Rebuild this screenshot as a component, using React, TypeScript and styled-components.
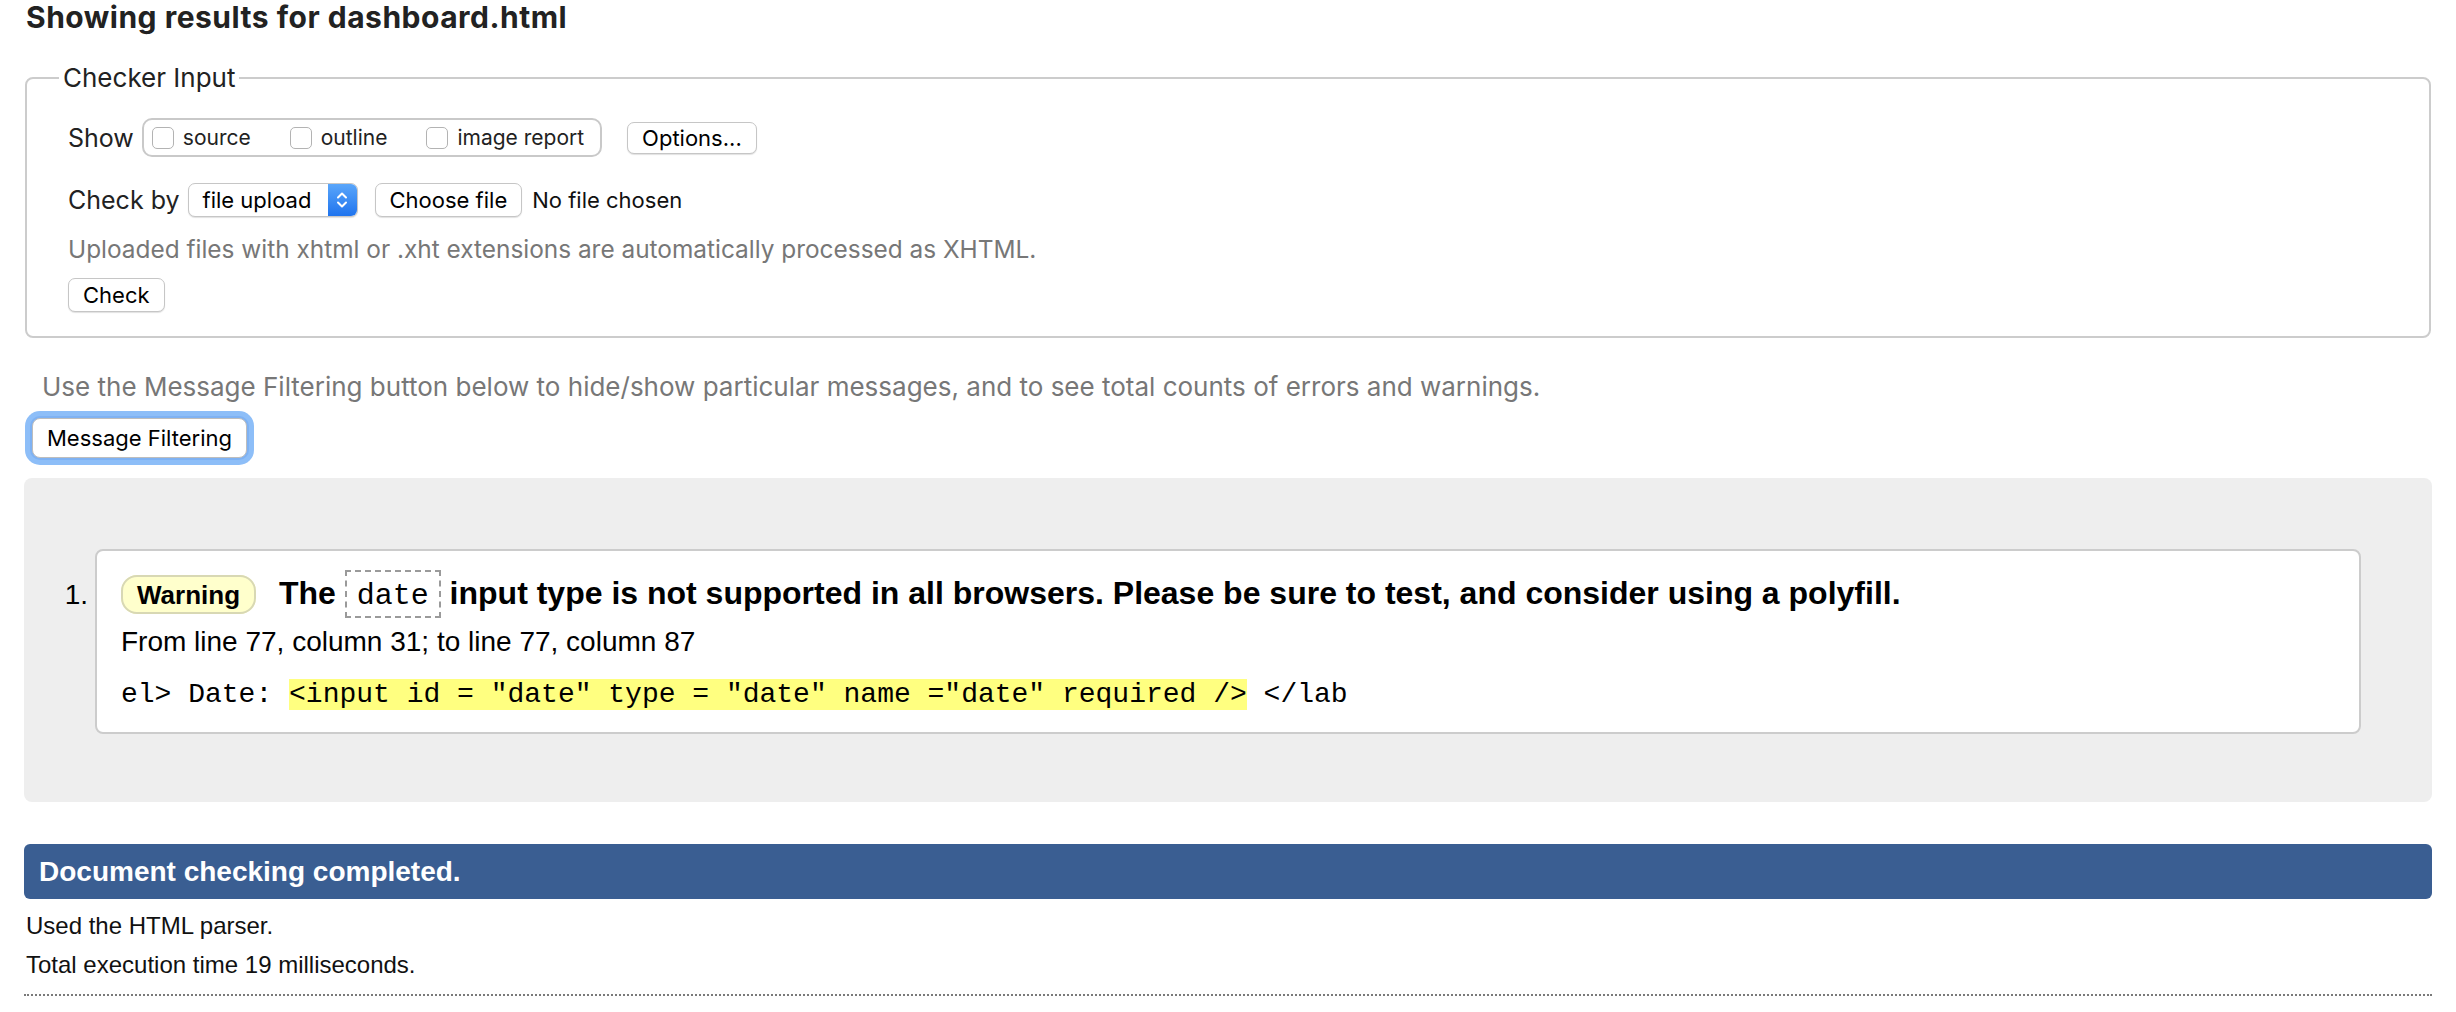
import React from "react";
import styled, { createGlobalStyle } from "styled-components";

const SF = `Inter, "Liberation Sans", Arial, sans-serif`;
const HV = `"Liberation Sans", Arial, Helvetica, sans-serif`;
const MONO = `"Liberation Mono", "Courier New", monospace`;

const GlobalStyle = createGlobalStyle`
  html, body { margin: 0; padding: 0; background: #fff; }
  body { font-family: ${HV}; color: #222; }
  * { box-sizing: border-box; }
`;

const Page = styled.main`
  display: flex;
  flex-direction: column;
  padding: 0 24px;
`;

const Title = styled.h2`
  margin: 0 0 0 2px;
  font-family: ${SF};
  font-size: 30px;
  font-weight: 700;
  letter-spacing: 0.5px;
  line-height: 34px;
  color: #222;
`;

const CheckerFieldset = styled.fieldset`
  margin: 29px 1px 0 1px;
  padding: 0 0 24px 41px;
  border: 2px solid #cccccc;
  border-radius: 8px;
  min-width: 0;
`;

const Legend = styled.legend`
  margin-left: -9px;
  padding: 0 4px;
  font-family: ${SF};
  font-size: 26px;
  line-height: 30px;
  color: #222;
`;

const FieldBody = styled.div`
  display: flex;
  flex-direction: column;
  align-items: flex-start;
  padding-top: 25px;
`;

const FormRow = styled.div<{ $mt: number }>`
  display: flex;
  align-items: center;
  margin-top: ${(p) => p.$mt}px;
  font-family: ${SF};
  font-size: 25px;
  color: #222;
`;

const RowLabel = styled.span`
  line-height: 30px;
`;

const ShowGroup = styled.div`
  display: flex;
  align-items: center;
  height: 39px;
  margin-left: 8px;
  padding: 0 16px 0 8px;
  border: 2px solid #c9c9c9;
  border-radius: 10px;
`;

const CheckLabel = styled.label<{ $last?: boolean }>`
  display: flex;
  align-items: center;
  gap: 9px;
  margin-right: ${(p) => (p.$last ? 0 : 39)}px;
  font-size: 21px;
  color: #222;
`;

const Box = styled.input`
  appearance: none;
  width: 22px;
  height: 22px;
  margin: 0;
  border: 1.5px solid #b3b3b3;
  border-radius: 5px;
  background: #fff;
`;

const Btn = styled.button<{ $h: number; $ml?: number }>`
  height: ${(p) => p.$h}px;
  margin-left: ${(p) => p.$ml ?? 0}px;
  padding: 0 14px;
  font-family: ${SF};
  font-size: 22px;
  color: #000;
  background: #fff;
  border: 1.5px solid #c6c6c6;
  border-radius: 7px;
  box-shadow: 0 1px 1px rgba(0, 0, 0, 0.12);
`;

const Select = styled.div`
  display: flex;
  align-items: stretch;
  width: 170px;
  height: 34px;
  margin-left: 8px;
  border: 1.5px solid #c6c6c6;
  border-radius: 7px;
  background: #fff;
  box-shadow: 0 1px 1px rgba(0, 0, 0, 0.12);
  overflow: hidden;
`;

const SelectText = styled.span`
  flex: 1;
  display: flex;
  align-items: center;
  padding-left: 14px;
  font-size: 22px;
  color: #000;
`;

const SelectArrow = styled.span`
  width: 29px;
  display: flex;
  align-items: center;
  justify-content: center;
  background: linear-gradient(#5aa6fa, #1f74ee);
`;

const FileNote = styled.span`
  margin-left: 10px;
  font-size: 22px;
  color: #111;
`;

const Hint = styled.p<{ $mt: number; $ml?: number; $size: number }>`
  margin: ${(p) => p.$mt}px 0 0 ${(p) => p.$ml ?? 0}px;
  font-family: ${SF};
  font-size: ${(p) => p.$size}px;
  line-height: 30px;
  color: #777;
`;

const FilterButton = styled.button`
  align-self: flex-start;
  height: 40px;
  margin: 16px 0 0 8px;
  padding: 0 14px;
  font-family: ${SF};
  font-size: 22px;
  color: #000;
  background: #fff;
  border: 1.5px solid #bdbdbd;
  border-radius: 8px;
  box-shadow: 0 0 0 2px #7fb2f3, 0 0 0 7px #8dbef8;
`;

const Results = styled.section`
  margin-top: 20px;
  padding: 71px 71px 68px 0;
  background: #eeeeee;
  border-radius: 8px;
`;

const ResultRow = styled.div`
  display: flex;
  align-items: baseline;
`;

const Num = styled.span`
  flex: none;
  width: 71px;
  padding-right: 7px;
  text-align: right;
  font-family: ${HV};
  font-size: 28px;
  color: #000;
`;

const Card = styled.div`
  flex: 1;
  padding: 25px 24px 21px;
  background: #fff;
  border: 2px solid #cccccc;
  border-radius: 8px;
`;

const MsgLine = styled.p`
  margin: 0;
  font-family: ${HV};
  font-size: 32px;
  font-weight: 700;
  line-height: 34px;
  color: #000;
`;

const Badge = styled.span`
  margin-right: 14px;
  padding: 3px 14px 2px;
  font-size: 26px;
  line-height: 1;
  background: #ffffcc;
  border: 2px solid #d8d8b4;
  border-radius: 16px;
`;

const InlineCode = styled.code`
  padding: 7px 10px 3px;
  font-family: ${MONO};
  font-size: 30px;
  font-weight: 400;
  line-height: 0.8;
  border: 2px dashed #9a9a9a;
`;

const Location = styled.p`
  margin: 16px 0 0;
  font-family: ${HV};
  font-size: 28px;
  line-height: 32px;
  color: #000;
`;

const Extract = styled.p`
  margin: 21px 0 0;
  font-family: ${MONO};
  font-size: 28px;
  line-height: 32px;
  white-space: pre;
  color: #000;
`;

const Mark = styled.mark`
  background: #ffff80;
  color: #000;
`;

const Completed = styled.h3`
  margin: 42px 0 0;
  height: 55px;
  padding-left: 15px;
  font-family: ${HV};
  font-size: 28px;
  font-weight: 700;
  line-height: 55px;
  color: #fff;
  background: #3a5e92;
  border-radius: 6px;
`;

const Detail = styled.p<{ $mt: number }>`
  margin: ${(p) => p.$mt}px 0 0 2px;
  font-family: ${HV};
  font-size: 24px;
  line-height: 30px;
  color: #111;
`;

const Dotted = styled.div`
  margin-top: 14px;
  border-top: 2px dotted #7a7a7a;
`;

const Chevrons = () => (
  <svg width="12" height="20" viewBox="0 0 12 20" fill="none" stroke="#fff" strokeWidth="2" strokeLinecap="round" strokeLinejoin="round">
    <path d="M2 7.5 L6 3.5 L10 7.5" />
    <path d="M2 12.5 L6 16.5 L10 12.5" />
  </svg>
);

export default function App() {
  return (
    <>
      <GlobalStyle />
      <Page>
        <Title>Showing results for dashboard.html</Title>

        <CheckerFieldset>
          <Legend>Checker Input</Legend>
          <FieldBody>
            <FormRow $mt={0}>
              <RowLabel>Show</RowLabel>
              <ShowGroup>
                <CheckLabel>
                  <Box type="checkbox" />
                  source
                </CheckLabel>
                <CheckLabel>
                  <Box type="checkbox" />
                  outline
                </CheckLabel>
                <CheckLabel $last>
                  <Box type="checkbox" />
                  image report
                </CheckLabel>
              </ShowGroup>
              <Btn $h={32} $ml={25}>Options...</Btn>
            </FormRow>

            <FormRow $mt={26}>
              <RowLabel>Check by</RowLabel>
              <Select>
                <SelectText>file upload</SelectText>
                <SelectArrow>
                  <Chevrons />
                </SelectArrow>
              </Select>
              <Btn $h={34} $ml={17}>Choose file</Btn>
              <FileNote>No file chosen</FileNote>
            </FormRow>

            <Hint $mt={17} $size={24.4}>Uploaded files with xhtml or .xht extensions are automatically processed as XHTML.</Hint>

            <FormRow $mt={14}>
              <Btn $h={34}>Check</Btn>
            </FormRow>
          </FieldBody>
        </CheckerFieldset>

        <Hint $mt={34} $ml={18} $size={26}>
          Use the Message Filtering button below to hide/show particular messages, and to see total counts of errors and warnings.
        </Hint>
        <FilterButton>Message Filtering</FilterButton>

        <Results>
          <ResultRow>
            <Num>1.</Num>
            <Card>
              <MsgLine>
                <Badge>Warning</Badge> The <InlineCode>date</InlineCode> input type is not supported in all browsers. Please be sure to test, and consider using a polyfill.
              </MsgLine>
              <Location>From line 77, column 31; to line 77, column 87</Location>
              <Extract>
                {"el> Date: "}
                <Mark>{'<input id = "date" type = "date" name ="date" required />'}</Mark>
                {" </lab"}
              </Extract>
            </Card>
          </ResultRow>
        </Results>

        <Completed>Document checking completed.</Completed>
        <Detail $mt={12}>Used the HTML parser.</Detail>
        <Detail $mt={9}>Total execution time 19 milliseconds.</Detail>
        <Dotted />
      </Page>
    </>
  );
}
